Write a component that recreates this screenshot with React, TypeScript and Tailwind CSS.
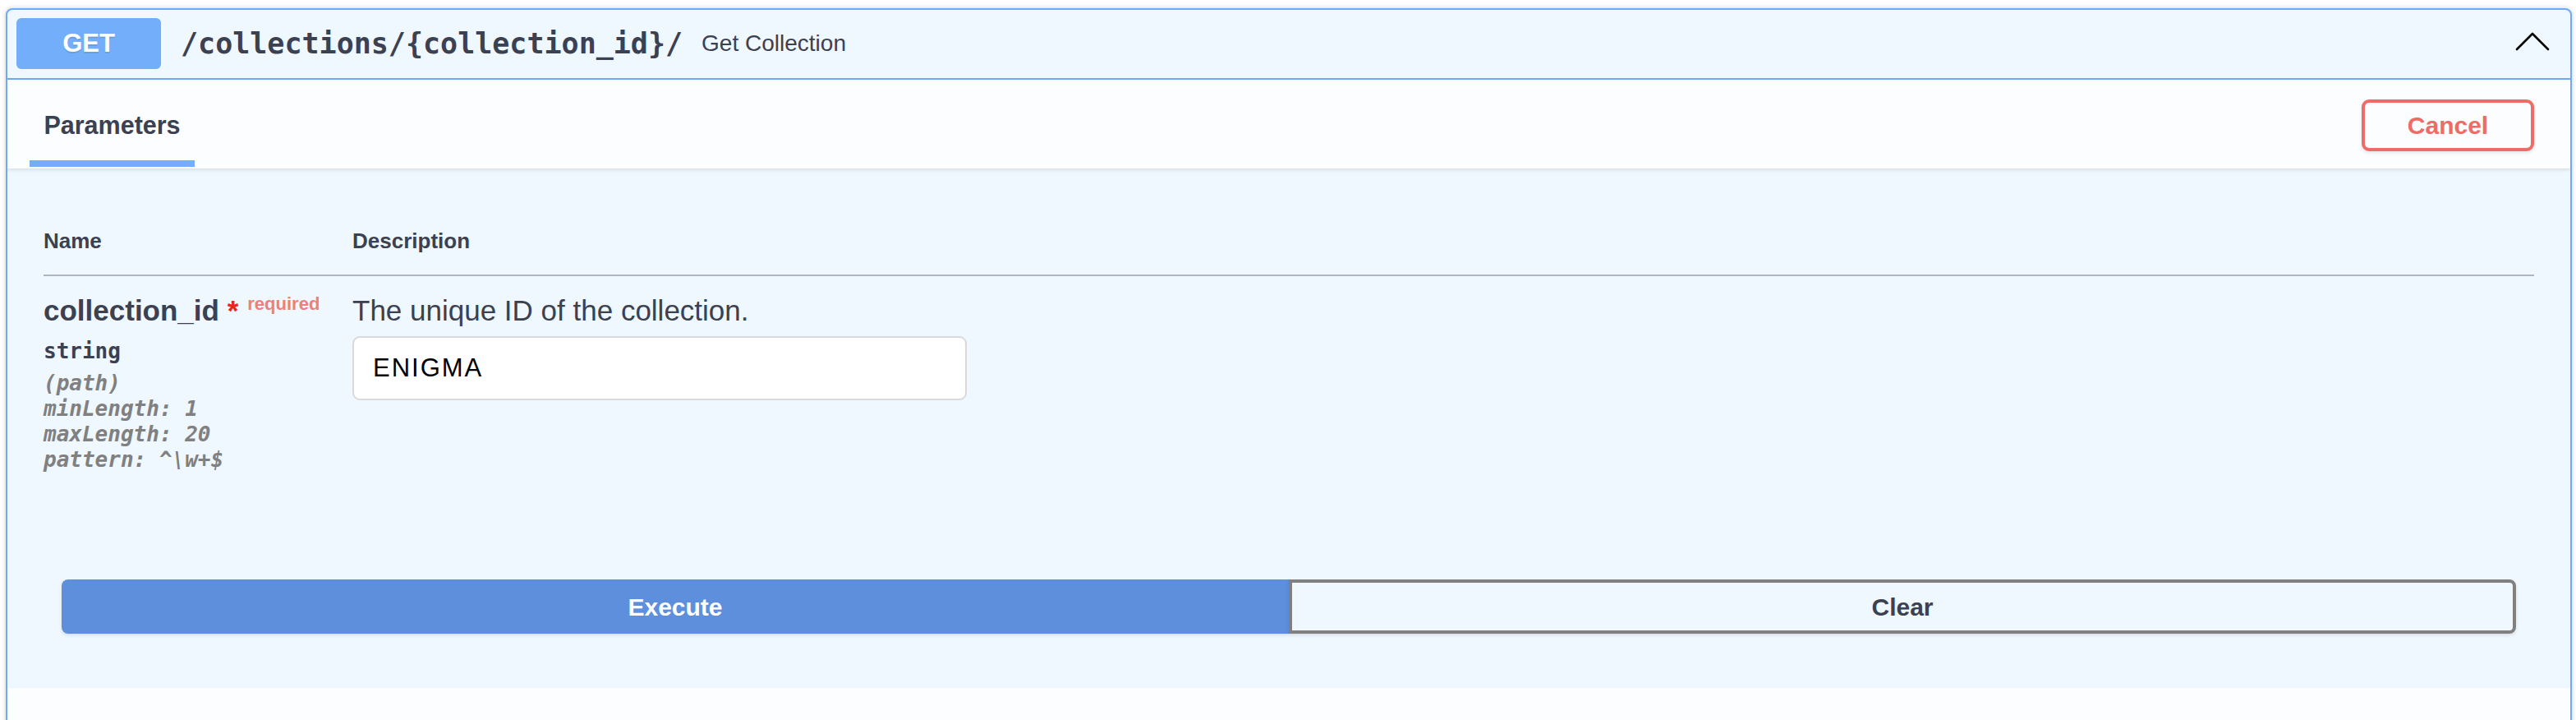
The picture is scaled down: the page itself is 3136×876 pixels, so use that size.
import * as React from "react";

const sans = "font-['Liberation_Sans',Arial,sans-serif]";
const mono = "font-['DejaVu_Sans_Mono',Menlo,monospace]";

function Chevron() {
  return (
    <svg
      width="42"
      height="24"
      viewBox="0 0 42 24"
      className="self-start mt-[17px] ml-auto shrink-0"
      fill="none"
    >
      <path
        d="M2 21 L21 2 L40 21"
        stroke="#000"
        strokeWidth="2.6"
        strokeLinecap="round"
        strokeLinejoin="round"
      />
    </svg>
  );
}

function OpHeader() {
  return (
    <div className="flex items-center pl-[11px] pr-[25px] pt-[10px] pb-[11px] border-b-2 border-[#6eaaf8]">
      <span
        className={`${sans} flex w-[176px] h-[62px] shrink-0 items-center justify-center rounded-[6px] bg-[#73aefa] text-[31px] font-bold text-white [text-shadow:0_2px_0_rgba(0,0,0,0.1)]`}
      >
        GET
      </span>
      <span className={`${mono} ml-[24px] text-[35px] font-bold text-[#3b4151]`}>
        /collections/{"{collection_id}"}/
      </span>
      <span className={`${sans} ml-[23px] text-[28px] text-[#3b4151]`}>
        Get Collection
      </span>
      <Chevron />
    </div>
  );
}

function SectionHeader({ title, cancel }: { title?: string; cancel?: boolean }) {
  return (
    <div className="relative z-10 flex h-[108px] justify-between bg-[#fcfdff] pl-[27px] pr-[44px] shadow-[0_2px_4px_rgba(0,0,0,0.1)]">
      {title && (
        <div className="flex w-[201px] flex-col">
          <div
            className={`${sans} pt-[37px] text-center text-[30.5px] font-bold leading-[36px] text-[#3b4151]`}
          >
            {title}
          </div>
          <div className="mt-[25px] h-[8px] bg-[#73aefa]" />
        </div>
      )}
      {cancel && (
        <button
          className={`${sans} mt-[24px] h-[63px] w-[210px] rounded-[9px] border-[4px] border-[#ee6b66] bg-transparent text-[30px] font-bold text-[#ee6b66] shadow-[0_2px_4px_rgba(0,0,0,0.1)]`}
        >
          Cancel
        </button>
      )}
    </div>
  );
}

function ParamTable() {
  const meta = ["(path)", "minLength: 1", "maxLength: 20", "pattern: ^\\w+$"];
  return (
    <div className="px-[44px] pt-[73px]">
      <div
        className={`${sans} grid grid-cols-[376px_1fr] border-b-2 border-[#aeb5c1] pb-[26px] text-[26px] font-bold leading-[30px] text-[#3b4151]`}
      >
        <div>Name</div>
        <div>Description</div>
      </div>
      <div className="grid grid-cols-[376px_1fr] pt-[22px] pb-[22px]">
        <div>
          <div className={`${sans} whitespace-nowrap text-[35px] font-bold leading-[40px] text-[#3b4151]`}>
            collection_id
            <span className="text-[#e5281c]">&nbsp;*</span>
            <span className="relative -top-[13px] px-[11px] text-[22px] text-[#f07f7b]">
              required
            </span>
          </div>
          <div className={`${mono} mt-[9px] text-[26px] font-bold leading-[30px] text-[#3b4151]`}>
            string
          </div>
          <div className={`${mono} mt-[9px] text-[26px] font-bold italic leading-[31px] text-[#808080]`}>
            {meta.map((m) => (
              <div key={m}>{m}</div>
            ))}
          </div>
        </div>
        <div>
          <div className={`${sans} text-[35px] leading-[40px] text-[#3b4151]`}>
            The unique ID of the collection.
          </div>
          <input
            type="text"
            defaultValue="ENIGMA"
            className={`${sans} mt-[11px] h-[78px] w-[748px] rounded-[9px] border-2 border-[#d9d9d9] bg-white px-[23px] text-[31px] tracking-[2px] text-black outline-none`}
          />
        </div>
      </div>
    </div>
  );
}

function ButtonGroup() {
  return (
    <div className="flex px-[66px] pt-[108px] pb-[66px]">
      <button
        className={`${sans} h-[66px] w-1/2 rounded-l-[8px] bg-[#5d8fdd] text-[30px] font-bold text-white shadow-[0_2px_4px_rgba(0,0,0,0.1)]`}
      >
        Execute
      </button>
      <button
        className={`${sans} h-[66px] w-1/2 rounded-r-[8px] border-[4px] border-[#808080] bg-transparent text-[30px] font-bold text-[#3b4151] shadow-[0_2px_4px_rgba(0,0,0,0.1)]`}
      >
        Clear
      </button>
    </div>
  );
}

export default function App() {
  return (
    <div className="h-[876px] overflow-hidden bg-white pt-[10px] pl-[7px] pr-[5px]">
      <div className="overflow-hidden rounded-[8px] border-2 border-[#6eaaf8] bg-[#eff7ff] shadow-[0_0_6px_rgba(0,0,0,0.19)]">
        <OpHeader />
        <SectionHeader title="Parameters" cancel />
        <ParamTable />
        <ButtonGroup />
        <SectionHeader />
        <div className="h-[200px]" />
      </div>
    </div>
  );
}
